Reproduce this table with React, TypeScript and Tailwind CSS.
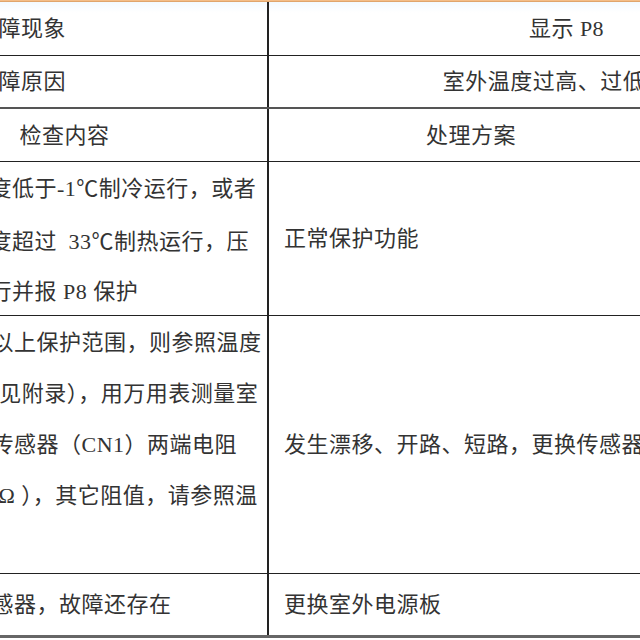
import React from 'react';

const font = "font-['Liberation_Serif','Noto_Sans_CJK_SC',serif]";

// ℃ in the reference is a full-width CJK glyph
function C() {
  return <span className="font-['Noto_Sans_CJK_SC',sans-serif]">℃</span>;
}

function Lines({ lines, leading }: { lines: React.ReactNode[]; leading: string }) {
  return (
    <div className={`flex flex-col ${leading}`}>
      {lines.map((l, i) => (
        <div key={i} className="whitespace-pre">
          {l || '\u00a0'}
        </div>
      ))}
    </div>
  );
}

export default function App() {
  return (
    <div className={`w-[640px] h-[640px] overflow-hidden bg-white text-[22px] tracking-[0.5px] text-[#333] ${font}`}>
      {/* top rule from the previous block */}
      <div className="h-[2px] bg-[#f4be88] border-b border-[#e0a56c]" />

      <div className="ml-[-138px] w-[1002px] flex flex-col">
        {/* 故障现象 */}
        <div className="flex h-[54px] border-b border-[#222]">
          <div className="w-[407px] shrink-0 border-r-2 border-[#222] flex items-center pl-[114px] bg-gradient-to-b from-[#f3faff] to-white to-[20%]">
            故障现象
          </div>
          <div className="flex-1 flex items-center justify-center bg-gradient-to-b from-[#f3faff] to-white to-[20%]">
            显示 P8
          </div>
        </div>

        {/* 故障原因 */}
        <div className="flex h-[53px] border-b-2 border-[#555]">
          <div className="w-[407px] shrink-0 border-r-2 border-[#222] flex items-center pl-[114px]">
            故障原因
          </div>
          <div className="flex-1 flex items-center justify-center">室外温度过高、过低保护</div>
        </div>

        {/* header */}
        <div className="flex h-[53px] border-b border-[#222]">
          <div className="w-[407px] shrink-0 border-r-2 border-[#222] flex items-center justify-center">
            检查内容
          </div>
          <div className="flex-1 flex items-center pl-[157px]">处理方案</div>
        </div>

        {/* row 1 */}
        <div className="flex h-[154px] border-b border-[#222]">
          <div className="w-[407px] shrink-0 border-r-2 border-[#222] flex items-center pl-[15px] overflow-hidden">
            <Lines
              leading="leading-[50px]"
              lines={[
                <>室外环境温度低于-1<C />制冷运行，或者</>,
                <>室外环境温度超过{'\u2002'}33<C />制热运行，压</>,
                '缩机停止运行并报 P8 保护',
              ]}
            />
          </div>
          <div className="flex-1 flex items-center pl-[15px]">正常保护功能</div>
        </div>

        {/* row 2 */}
        <div className="flex h-[258px] border-b border-[#222]">
          <div className="w-[407px] shrink-0 border-r-2 border-[#222] flex items-center pl-[17px] overflow-hidden">
            <Lines
              leading="leading-[51px]"
              lines={[
                '若温度不在以上保护范围，则参照温度',
                '温度阻值表(见附录），用万用表测量室',
                '外环境温度传感器（CN1）两端电阻',
                '阻值（10.5kΩ ），其它阻值，请参照温',
                '',
              ]}
            />
          </div>
          <div className="flex-1 flex items-center pl-[15px] whitespace-nowrap">
            发生漂移、开路、短路，更换传感器
          </div>
        </div>

        {/* row 3 */}
        <div className="flex h-[64px] border-b-[3px] border-[#666]">
          <div className="w-[407px] shrink-0 border-r-2 border-[#222] flex items-center pl-[17px] whitespace-nowrap overflow-hidden">
            更换温度传感器，故障还存在
          </div>
          <div className="flex-1 flex items-center pl-[15px]">更换室外电源板</div>
        </div>
      </div>
    </div>
  );
}
